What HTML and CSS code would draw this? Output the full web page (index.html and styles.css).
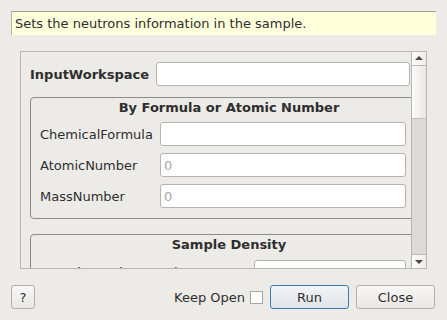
FILE: index.html
```html
<!DOCTYPE html>
<html lang="en">
<head>
    <meta charset="UTF-8">
    <title>Algorithm Dialog</title>
    <link rel="stylesheet" href="styles.css">
</head>
<body>
    <div class="dialog">
        <div class="tip">Sets the neutrons information in the sample.</div>

        <div class="scroll-frame">
            <div class="scroll-view">
                <div class="prop-row">
                    <label class="bold">InputWorkspace</label>
                    <input type="text" class="field wide">
                </div>

                <div class="group">
                    <div class="group-title">By Formula or Atomic Number</div>
                    <div class="group-grid">
                        <label>ChemicalFormula</label>
                        <input type="text" class="field">
                        <label>AtomicNumber</label>
                        <input type="text" class="field" placeholder="0">
                        <label>MassNumber</label>
                        <input type="text" class="field" placeholder="0">
                    </div>
                </div>

                <div class="group">
                    <div class="group-title">Sample Density</div>
                    <div class="group-grid density">
                        <label>SampleNumberDensity</label>
                        <input type="text" class="field">
                    </div>
                </div>
            </div>
            <div class="scrollbar">
                <div class="arrow up"></div>
                <div class="handle"></div>
                <div class="track"></div>
                <div class="arrow down"></div>
            </div>
        </div>

        <div class="buttons">
            <button class="btn help">?</button>
            <div class="spacer"></div>
            <label class="keep">Keep Open <span class="check"></span></label>
            <button class="btn run">Run</button>
            <button class="btn">Close</button>
        </div>
    </div>
</body>
</html>
```

FILE: styles.css
```css
body {
    margin: 0;
    background: #edebe7;
    font-family: "DejaVu Sans", sans-serif;
    font-size: 13px;
    color: #2e2e2e;
}

.dialog {
    width: 447px;
    height: 320px;
    overflow: hidden;
}

/* yellow description strip */
.tip {
    margin: 11px 11px 0 11px;
    height: 24px;
    line-height: 23px;
    padding-left: 3px;
    background: #ffffdc;
    border-top: 1px solid #9e9b97;
    border-left: 1px solid #b7b4af;
    box-sizing: border-box;
}

.scroll-frame {
    display: flex;
    margin: 16px 20px 0 20px;
    height: 218px;
    border: 1px solid #b9b5b0;
    box-sizing: border-box;
}

.scroll-view {
    flex: 1;
    overflow: hidden;
    padding: 10px 0 0 9px;
}

.prop-row {
    display: flex;
    align-items: center;
    height: 24px;
}

.bold {
    font-weight: bold;
    width: 126px;
}

.field {
    height: 24px;
    box-sizing: border-box;
    border: 1px solid #b6b2ad;
    border-radius: 3px;
    background: #fff;
    font-family: "DejaVu Sans", sans-serif;
    font-size: 13px;
    padding: 0 3px;
    margin: 0;
    color: #2e2e2e;
}

.field::placeholder {
    color: #a6a6a6;
}

.wide {
    width: 254px;
}

.group {
    width: 398px;
    margin-top: 11px;
    border: 1px solid #8e8c89;
    border-radius: 4px;
    padding: 0 0 10px 9px;
    box-sizing: border-box;
}

.group + .group {
    margin-top: 15px;
}

.group-title {
    font-weight: bold;
    text-align: center;
    padding-right: 9px;
    height: 24px;
    line-height: 20px;
}

.group-grid {
    display: grid;
    grid-template-columns: 120px 246px;
    row-gap: 7px;
    align-items: center;
}

.group-grid.density {
    grid-template-columns: 214px 152px;
    margin-top: 1px;
}

.scrollbar {
    width: 14px;
    display: flex;
    flex-direction: column;
    border-left: 1px solid #b9b5b0;
}

.arrow {
    height: 13px;
    background: linear-gradient(to right, #fdfdfd, #eeecea);
    position: relative;
}

.arrow.up {
    border-bottom: 1px solid #bdb9b5;
}

.arrow.down {
    border-top: 1px solid #bdb9b5;
}

.arrow::after {
    content: "";
    position: absolute;
    left: 3px;
    top: 4px;
    border-left: 4px solid transparent;
    border-right: 4px solid transparent;
}

.arrow.up::after {
    border-bottom: 4px solid #4a4a4a;
}

.arrow.down::after {
    top: 5px;
    border-top: 4px solid #4a4a4a;
}

.handle {
    height: 52px;
    background: linear-gradient(to right, #fcfcfc, #e9e7e4);
    border-bottom: 1px solid #c4c0bc;
}

.track {
    flex: 1;
    background: #dcdad6;
}

/* bottom buttons */
.buttons {
    display: flex;
    align-items: center;
    margin: 16px 12px 0 11px;
    height: 24px;
}

.spacer {
    flex: 1;
}

.btn {
    height: 24px;
    width: 79px;
    margin: 0 0 0 7px;
    padding: 0;
    box-sizing: border-box;
    border: 1px solid #b3afaa;
    border-radius: 3px;
    background: linear-gradient(#f8f7f6, #e9e7e4);
    font-family: "DejaVu Sans", sans-serif;
    font-size: 13px;
    color: #2e2e2e;
}

.help {
    width: 24px;
    margin-left: 0;
}

.run {
    border-color: #3b7bae;
    background: linear-gradient(#f2f4f6, #dfe4e8);
}

.keep {
    display: flex;
    align-items: center;
    gap: 5px;
}

.check {
    width: 13px;
    height: 13px;
    box-sizing: border-box;
    border: 1px solid #aaa6a1;
    background: #fff;
}
```
